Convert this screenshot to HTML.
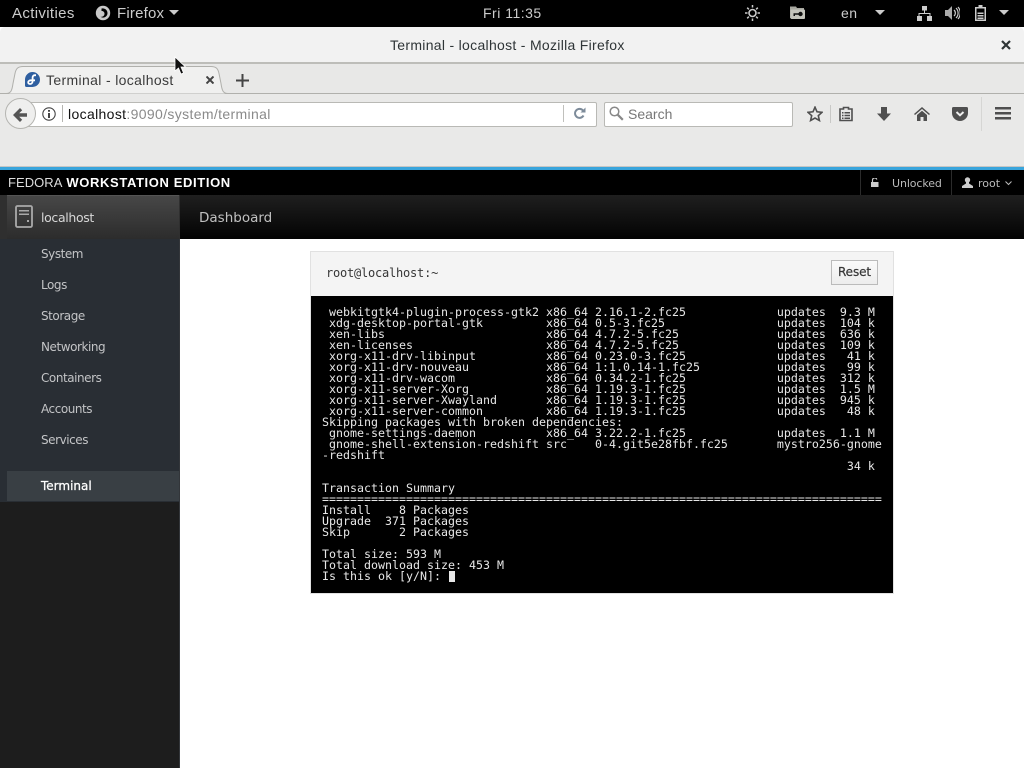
<!DOCTYPE html>
<html><head><meta charset="utf-8"><title>Terminal - localhost - Mozilla Firefox</title>
<style>
html,body{margin:0;padding:0;width:1024px;height:768px;overflow:hidden;background:#fff}
body{position:relative;font-family:"DejaVu Sans","Liberation Sans",sans-serif}
.a{position:absolute;white-space:nowrap}
svg{position:absolute;display:block}
.nav{position:absolute;left:41px;font-size:12px;color:#c3c4c6;line-height:16px;letter-spacing:-.45px}
pre{position:absolute;margin:0;left:322px;top:307px;font:11.63px/11px "DejaVu Sans Mono","Liberation Mono",monospace;color:#e8e8e8}
</style></head><body>

<!-- GNOME top bar -->
<div class="a" style="left:0;top:0;width:1024px;height:27px;background:#000"></div>
<div class="a" style="left:12px;top:5px;font-size:15px;line-height:18px;color:#ccc;font-family:'Liberation Sans',sans-serif;letter-spacing:.35px">Activities</div>
<svg style="left:95px;top:5px" width="16" height="16" viewBox="0 0 16 16"><circle cx="8" cy="8" r="7.200" fill="#c8c8c8"/><path d="M6.500 3.500a4.800 4.800 0 0 1 6 4.800 4.500 4.500 0 0 1-7 3.500c2 .3 4-.8 4-3 0-1.800-1.300-3-3-2.800 0-1 0-1.800 0-2.500z" fill="#000"/></svg>
<div class="a" style="left:117px;top:5px;font-size:15px;line-height:18px;color:#ccc;font-family:'Liberation Sans',sans-serif;letter-spacing:.2px">Firefox</div>
<svg style="left:169px;top:10px" width="10" height="6"><path d="M0 0h10L5 5z" fill="#ccc"/></svg>
<div class="a" style="left:483px;top:4px;font-size:14px;line-height:18px;color:#ccc;font-family:'Liberation Sans',sans-serif;letter-spacing:.5px">Fri 11:35</div>
<svg style="left:744px;top:5px" width="17" height="16" viewBox="0 0 17 16"><circle cx="8.500" cy="8" r="3.500" fill="none" stroke="#ccc" stroke-width="1.600"/><path d="M8.500 0v2.500M8.500 13.500V16M1 8h2.500M13.500 8H16M3.200 2.700l1.700 1.700M12.100 11.600l1.700 1.700M3.200 13.300l1.700-1.700M12.100 4.400l1.700-1.700" stroke="#ccc" stroke-width="1.500"/></svg>
<svg style="left:789px;top:6px" width="17" height="14" viewBox="0 0 17 14"><path d="M1 .5h6L8 2h7v2H3v8H1z" fill="#a8a8a0"/><rect x="1.500" y="3.500" width="14.500" height="9.500" rx="1" fill="#c4c4bc"/><circle cx="11.500" cy="8" r="2.200" fill="#111"/><path d="M4.500 7.200h6v1.600H6V10H4.500z" fill="#111"/></svg>
<div class="a" style="left:841px;top:4px;font-size:14px;line-height:18px;color:#ccc;font-family:'Liberation Sans',sans-serif;letter-spacing:.5px">en</div>
<svg style="left:875px;top:10px" width="10" height="6"><path d="M0 0h10L5 5z" fill="#ccc"/></svg>
<svg style="left:917px;top:6px" width="15" height="15" viewBox="0 0 15 15" fill="#ccc"><rect x="5" y="0" width="5" height="4.500"/><rect x="0" y="10" width="5" height="5"/><rect x="10" y="10" width="5" height="5"/><path d="M7 4.500h1V7h5.500v3h-1V8h-10v2h-1V7H7z"/></svg>
<svg style="left:945px;top:6px" width="15" height="14" viewBox="0 0 15 14"><path d="M0 4h3l4-4v14l-4-4H0z" fill="#aaa"/><path d="M9 4a4 4 0 0 1 0 6M11 2a7 7 0 0 1 0 10M13 1a9 9 0 0 1 0 12" fill="none" stroke="#ccc" stroke-width="1.200"/></svg>
<svg style="left:974px;top:5px" width="14" height="16" viewBox="0 0 14 16"><path d="M4.500 0h4v2h3.500v14H1V2h3.500z" fill="#ccc"/><rect x="2.500" y="3.500" width="8" height="11" fill="#000"/><path d="M3.500 7.500h6v1.500h-6zM3.500 10h6v1.500h-6zM3.500 12.500h6V14h-6z" fill="#ccc"/></svg>
<svg style="left:999px;top:10px" width="10" height="6"><path d="M0 0h10L5 5z" fill="#ccc"/></svg>

<!-- Window title bar -->
<div class="a" style="left:0;top:27px;width:1024px;background:#f2f2f2;border-radius:5px 5px 0 0;border-bottom:2px solid #bdbdb9;height:35px"></div>
<div class="a" style="left:390px;top:36px;font-size:14px;line-height:18px;color:#2e3436;font-family:'Liberation Sans',sans-serif;font-weight:400;letter-spacing:.3px">Terminal - localhost - Mozilla Firefox</div>
<svg style="left:1001px;top:40px" width="10" height="10"><path d="M1 1l8 8M9 1l-8 8" stroke="#2e3436" stroke-width="2.200"/></svg>

<!-- Tab strip -->
<div class="a" style="left:0;top:64px;width:1024px;height:29px;background:#e8e8e7"></div>
<div class="a" style="left:0;top:93px;width:1024px;height:1px;background:#b0b0ac"></div>
<svg style="left:0;top:65px" width="240" height="30" viewBox="0 0 240 30"><path d="M0 28.500h6c5 0 6-3 7-10l2-10c1-5 3-7 8-7h188c5 0 7 2 8 7l2 10c1 7 2 10 7 10h10" fill="#f0f0ef" stroke="#b0b0ac"/></svg>
<svg style="left:25px;top:72px" width="15" height="15" viewBox="0 0 15 15"><path d="M7.500 0A7.500 7.500 0 0 1 7.500 15H1.500A1.500 1.500 0 0 1 0 13.500V7.500A7.500 7.500 0 0 1 7.500 0z" fill="#2f5fa0"/><path d="M11 3.200H9.800C8.300 3.200 7.600 4.200 7.600 5.700V9.300C7.600 11 6.500 12 5 12 3.800 12 3.200 11.300 3.200 10.400 3.200 9 4.500 8.300 6 8.300H10" fill="none" stroke="#fff" stroke-width="1.800"/></svg>
<div class="a" style="left:46px;top:71px;font-size:14px;line-height:18px;color:#3b3b3b;font-family:'Liberation Sans',sans-serif;letter-spacing:.35px">Terminal - localhost</div>
<svg style="left:206px;top:76px" width="8" height="8"><path d="M.5.5l7 7M7.500.5l-7 7" stroke="#444" stroke-width="2"/></svg>
<svg style="left:236px;top:74px" width="13" height="13"><path d="M6.500 0v13M0 6.500h13" stroke="#444" stroke-width="2"/></svg>

<!-- Nav toolbar -->
<div class="a" style="left:0;top:94px;width:1024px;height:73px;background:#e9e9e8"></div>
<div class="a" style="left:0;top:166px;width:1024px;height:1px;background:#c6c6c4"></div>
<div class="a" style="left:20px;top:102px;width:575px;height:23px;background:#fff;border:1px solid #b9b9b5;border-radius:2px"></div>
<div class="a" style="left:5px;top:98px;width:29px;height:29px;border-radius:50%;background:#efefee;border:1px solid #b5b5b1"></div>
<svg style="left:13px;top:108px" width="14" height="14" viewBox="0 0 14 14"><path d="M0 7l7-7 2.200 2.200-3 3H14v3.600H6.200l3 3L7 14z" fill="#555"/></svg>
<svg style="left:42px;top:107px" width="14" height="14" viewBox="0 0 14 14"><circle cx="7" cy="7" r="6.200" fill="none" stroke="#444" stroke-width="1.100"/><path d="M6 3h2v1.800H6zM6 6h2v5H6z" fill="#444"/></svg>
<div class="a" style="left:62px;top:105px;width:1px;height:17px;background:#b5b5b1"></div>
<div class="a" style="left:68px;top:105px;font-size:14px;line-height:18px;color:#8a8a8a;font-family:'Liberation Sans',sans-serif;letter-spacing:.35px"><span style="color:#111">localhost</span>:9090/system/terminal</div>
<div class="a" style="left:563px;top:105px;width:1px;height:17px;background:#c0c0bc"></div>
<svg style="left:573px;top:107px" width="13" height="13" viewBox="0 0 13 13"><path d="M10.500 8.500A4.500 4.500 0 1 1 10 3.500" fill="none" stroke="#7d8b9a" stroke-width="2"/><path d="M7.500 5.500h5v-5z" fill="#7d8b9a"/></svg>
<div class="a" style="left:604px;top:102px;width:187px;height:23px;background:#fff;border:1px solid #b9b9b5;border-radius:2px"></div>
<svg style="left:609px;top:106px" width="15" height="15" viewBox="0 0 15 15"><circle cx="5.500" cy="5.500" r="4.300" fill="none" stroke="#888" stroke-width="1.500"/><path d="M8.800 8.800l5 5" stroke="#888" stroke-width="2.200"/></svg>
<div class="a" style="left:628px;top:105px;font-size:14px;line-height:18px;color:#777;font-family:'Liberation Sans',sans-serif;letter-spacing:0">Search</div>
<svg style="left:807px;top:106px" width="16" height="16" viewBox="0 0 16 16"><path d="M8 1.200l2 4.600 5 .5-3.700 3.300 1.100 4.900L8 12l-4.400 2.500 1.100-4.900L1 6.300l5-.5z" fill="none" stroke="#4f4f4f" stroke-width="1.600"/></svg>
<div class="a" style="left:830px;top:105px;width:1px;height:18px;background:#c8c8c6"></div>
<svg style="left:839px;top:106px" width="14" height="16" viewBox="0 0 14 16"><path d="M4.500 1.500h5V3H13v11.500H1V3h3.500z" fill="none" stroke="#4f4f4f" stroke-width="1.600"/><path d="M3 6h1.500v1.500H3zM5.500 6H11v1.500H5.500zM3 8.800h1.500v1.500H3zM5.500 8.800H11v1.500H5.500zM3 11.500h1.500V13H3zM5.500 11.500H11V13H5.500z" fill="#4f4f4f"/></svg>
<svg style="left:877px;top:107px" width="14" height="14" viewBox="0 0 14 14"><path d="M4 0h6v6.500h4L7 14 0 6.500h4z" fill="#4f4f4f"/></svg>
<svg style="left:914px;top:107px" width="16" height="14" viewBox="0 0 16 14"><path d="M8 0l8 7-1 1-7-6-7 6-1-1z" fill="#4f4f4f"/><path d="M3 8l5-4.300L13 8v6H9.500V10h-3v4H3z" fill="#4f4f4f"/></svg>
<svg style="left:952px;top:107px" width="16" height="14" viewBox="0 0 16 14"><path d="M1.500 0h13A1.500 1.500 0 0 1 16 1.500V6a8 8 0 0 1-16 0V1.500A1.500 1.500 0 0 1 1.500 0z" fill="#4f4f4f"/><path d="M4.500 5L8 8.300 11.500 5" fill="none" stroke="#eee" stroke-width="2"/></svg>
<div class="a" style="left:981px;top:97px;width:1px;height:34px;background:#d6d6d4"></div>
<svg style="left:995px;top:107px" width="16" height="13"><path d="M0 0h16v2.500H0zM0 5h16v2.500H0zM0 10h16v2.500H0z" fill="#4f4f4f"/></svg>

<!-- Cockpit masthead -->
<div class="a" style="left:0;top:167px;width:1024px;height:3px;background:#39a5dc"></div>
<div class="a" style="left:0;top:170px;width:1024px;height:25px;background:#000"></div>
<div class="a" style="left:8px;top:174px;font-size:13px;line-height:18px;color:#ddd;font-family:'Liberation Sans',sans-serif;letter-spacing:.05px;word-spacing:1px">FEDORA <b style="color:#fff;letter-spacing:.62px;word-spacing:0">WORKSTATION EDITION</b></div>
<div class="a" style="left:860px;top:170px;width:1px;height:25px;background:#2b2b2b"></div>
<div class="a" style="left:951px;top:170px;width:1px;height:25px;background:#2b2b2b"></div>
<svg style="left:871px;top:178px" width="8" height="9" viewBox="0 0 8 9"><rect y="4" width="7.500" height="5" fill="#ccc"/><path d="M1.500 4V2a2.200 2.200 0 0 1 4.300-.5" fill="none" stroke="#ccc" stroke-width="1.200"/></svg>
<div class="a" style="left:892px;top:175.500px;font-size:11px;line-height:16px;color:#bbb;letter-spacing:-.1px">Unlocked</div>
<svg style="left:962px;top:177px" width="11" height="11" viewBox="0 0 11 11"><circle cx="5.500" cy="3" r="2.700" fill="#ccc"/><path d="M4 5h3v1.500l4 2.500v2H0V9l4-2.500z" fill="#ccc"/></svg>
<div class="a" style="left:978px;top:175.500px;font-size:11px;line-height:16px;color:#bbb">root</div>
<svg style="left:1005px;top:181px" width="7" height="5"><path d="M.5.500L3.500 3.500 6.500.5" fill="none" stroke="#bbb"/></svg>

<!-- Host/Dashboard bars -->
<div class="a" style="left:180px;top:195px;width:844px;height:44px;background:linear-gradient(#1f1f1f,#030303)"></div>
<div class="a" style="left:199px;top:209px;font-size:13.500px;line-height:18px;color:#c0c0c0">Dashboard</div>
<div class="a" style="left:0;top:195px;width:180px;height:44px;background:#2f2f2f"></div>
<div class="a" style="left:7px;top:195px;width:172px;height:44px;background:linear-gradient(#474747,#2c2c2c);border-top:1px solid #555;box-sizing:border-box"></div>
<svg style="left:15px;top:205px" width="19" height="24" viewBox="0 0 19 24"><rect x="1" y="1" width="16" height="21" rx="1.500" fill="none" stroke="#aaa" stroke-width="1.800"/><path d="M4 5h10v1.500H4zM4 8.500h10V10H4zM12 15h2v2h-2z" fill="#aaa"/></svg>
<div class="a" style="left:41px;top:210px;font-size:12.500px;line-height:16px;color:#d8d8d8;letter-spacing:-.35px">localhost</div>

<!-- Sidebar -->
<div class="a" style="left:0;top:239px;width:180px;height:529px;background:#1d1d1d;border-right:0"></div>
<div class="a" style="left:0;top:239px;width:180px;height:263px;background:#292e34"></div>
<div class="a" style="left:7px;top:471px;width:172px;height:30px;background:#393f44"></div>
<div class="a" style="left:179px;top:239px;width:1px;height:529px;background:#33363a"></div>
<div class="nav" style="top:246px">System</div>
<div class="nav" style="top:277px">Logs</div>
<div class="nav" style="top:308px">Storage</div>
<div class="nav" style="top:339px">Networking</div>
<div class="nav" style="top:370px">Containers</div>
<div class="nav" style="top:401px">Accounts</div>
<div class="nav" style="top:432px">Services</div>
<div class="nav" style="top:478px;color:#fff;letter-spacing:0;-webkit-text-stroke:.25px #fff">Terminal</div>

<!-- Terminal panel -->
<div class="a" style="left:310px;top:251px;width:582px;height:341px;border:1px solid #e1e1e1;background:#f4f4f4"></div>
<div class="a" style="left:326px;top:265px;font:12px/16px 'DejaVu Sans Mono','Liberation Mono',monospace;color:#363636;letter-spacing:-.22px">root@localhost:~</div>
<div class="a" style="left:831px;top:260px;width:45px;height:23px;border:1px solid #bbb;background:linear-gradient(#fafafa,#ededed);text-align:center;font-size:12px;line-height:23px;color:#363636;letter-spacing:-.1px;-webkit-text-stroke:.2px #363636">Reset</div>
<div class="a" style="left:311px;top:296px;width:582px;height:297px;background:#000"></div>
<pre> webkitgtk4-plugin-process-gtk2 x86_64 2.16.1-2.fc25             updates  9.3 M
 xdg-desktop-portal-gtk         x86_64 0.5-3.fc25                updates  104 k
 xen-libs                       x86_64 4.7.2-5.fc25              updates  636 k
 xen-licenses                   x86_64 4.7.2-5.fc25              updates  109 k
 xorg-x11-drv-libinput          x86_64 0.23.0-3.fc25             updates   41 k
 xorg-x11-drv-nouveau           x86_64 1:1.0.14-1.fc25           updates   99 k
 xorg-x11-drv-wacom             x86_64 0.34.2-1.fc25             updates  312 k
 xorg-x11-server-Xorg           x86_64 1.19.3-1.fc25             updates  1.5 M
 xorg-x11-server-Xwayland       x86_64 1.19.3-1.fc25             updates  945 k
 xorg-x11-server-common         x86_64 1.19.3-1.fc25             updates   48 k
Skipping packages with broken dependencies:
 gnome-settings-daemon          x86_64 3.22.2-1.fc25             updates  1.1 M
 gnome-shell-extension-redshift src    0-4.git5e28fbf.fc25       mystro256-gnome
-redshift
                                                                           34 k

Transaction Summary
================================================================================
Install    8 Packages
Upgrade  371 Packages
Skip       2 Packages

Total size: 593 M
Total download size: 453 M
Is this ok [y/N]: </pre>
<div class="a" style="left:449px;top:571px;width:6px;height:11px;background:#e8e8e8"></div>

<!-- Mouse cursor -->
<svg style="left:174px;top:56px" width="13" height="20" viewBox="0 0 13 20"><path d="M1 1v14l3.500-3 2.500 6 2.500-1-2.500-6h4.500z" fill="#111" stroke="#fff" stroke-width=".8"/></svg>
</body></html>
